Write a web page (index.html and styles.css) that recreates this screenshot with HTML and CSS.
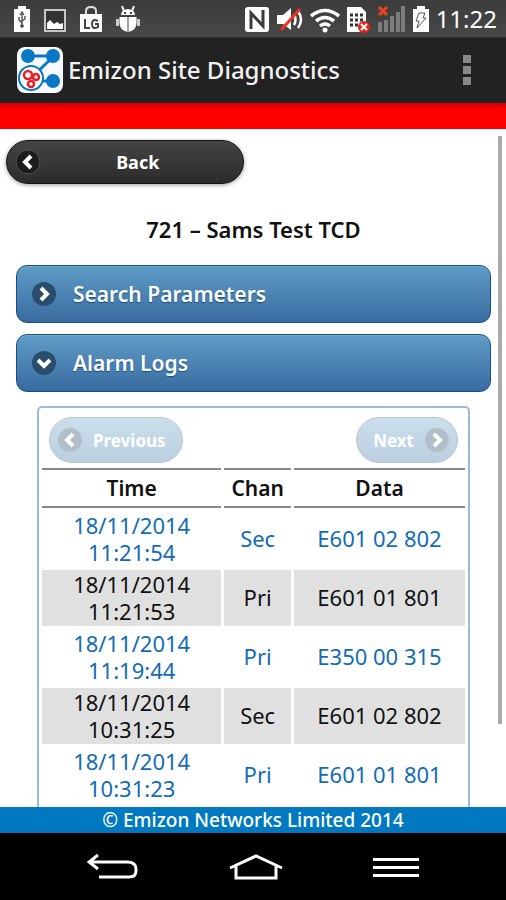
FILE: index.html
```html
<!DOCTYPE html>
<html lang="en">
<head>
<meta charset="utf-8">
<meta name="viewport" content="width=device-width, initial-scale=1">
<title>Emizon Site Diagnostics</title>
<link rel="stylesheet" href="styles.css">
</head>
<body>
<div class="status">
  <div class="status-group notices">
    <svg width="18" height="28" viewBox="0 0 18 28" aria-hidden="true"><path d="M5 1h8v3h4v23H1V4h4z" fill="#fff"/><path d="M9 21V9M9 18l-3-3v-3M9 16l3-2v-3M7 10l2-3 2 3" fill="none" stroke="#444" stroke-width="1.3"/><circle cx="9" cy="21" r="1.8" fill="#444"/></svg>
    <svg width="24" height="28" viewBox="0 0 24 28" aria-hidden="true"><path d="M2 5h20v21H2z" fill="#333" stroke="#c8c8c8" stroke-width="2"/><path d="M4 24v-6l3-3 4 4 3-2 3 2 3-1v6z" fill="#fff"/></svg>
    <svg width="24" height="28" viewBox="0 0 24 28" aria-hidden="true"><path d="M7 10V6q0-4 5-4t5 4v4" fill="none" stroke="#ddd" stroke-width="2"/><path d="M1 9h22v18H1z" fill="#fff"/><path d="M6 14v9h5M19 16q-6-3-6 3t6 3v-3h-3" fill="none" stroke="#444" stroke-width="2"/></svg>
    <svg width="26" height="28" viewBox="0 0 26 28" aria-hidden="true"><path d="M6 10q0-5 7-6 7 1 7 6zM4.500 12h8v15q-8-2-8-9zM13.500 12h8v6q0 7-8 9z" fill="#fff"/><path d="M9 6L7 1M17 6l2-5" stroke="#fff" stroke-width="2"/><path d="M2.500 14v7M23.500 14v7" stroke="#ccc" stroke-width="3"/><path d="M9 8h2M15 8h2" stroke="#444" stroke-width="2"/></svg>
  </div>
  <div class="status-group signals">
    <svg width="26" height="28" viewBox="0 0 26 28" aria-hidden="true"><rect x="1" y="2" width="24" height="25" rx="3" fill="#fff"/><path d="M7 24V8l12 13V5" fill="none" stroke="#3c3c3c" stroke-width="3"/></svg>
    <svg width="28" height="28" viewBox="0 0 28 28" aria-hidden="true"><path d="M1 10h6l8-7v22l-8-6H1z" fill="#fff"/><path d="M18 9q3 6 0 11M22 6q6 9 0 17" fill="none" stroke="#fff" stroke-width="2.500"/><path d="M5 25L24 4" stroke="#f03020" stroke-width="3"/></svg>
    <svg width="30" height="28" viewBox="0 0 30 28" aria-hidden="true"><path d="M1 11q14-11 28 0M6 16q9-7 18 0M10 21q5-4 10 0" fill="none" stroke="#fff" stroke-width="3.500"/><circle cx="15" cy="25" r="2.500" fill="#fff"/></svg>
    <svg width="24" height="28" viewBox="0 0 24 28" aria-hidden="true"><path d="M1 2h14l5 5v20H1z" fill="#fff"/><path d="M4 10h13M4 15h13M4 20h13" stroke="#333" stroke-width="3" stroke-dasharray="3 2"/><circle cx="18" cy="22" r="6" fill="#ee2018"/><path d="M15 19l6 6M21 19l-6 6" stroke="#fff" stroke-width="2"/></svg>
    <svg width="30" height="28" viewBox="0 0 30 28" aria-hidden="true"><path d="M4 27V17M10 27V15M16 27V11M22 27V7M27 27V1" stroke="#7c7c7c" stroke-width="4"/><path d="M3 2l8 8M11 2l-8 8" stroke="#f04020" stroke-width="3"/></svg>
    <svg width="18" height="28" viewBox="0 0 18 28" aria-hidden="true"><path d="M5 1h8v3h4v23H1V4h4z" fill="#fff"/><path d="M7 8h6l-2 5h3L5 23l2-7H4z" fill="none" stroke="#555"/></svg>
    <span class="clock">11:22</span>
  </div>
</div>
<header class="appbar">
  <svg class="logo" width="48" height="48" viewBox="0 0 48 48" aria-hidden="true"><rect x="1" y="1" width="46" height="46" rx="8" fill="#f6faff"/><path d="M12 10h26L17 30M24 35h13" fill="none" stroke="#0878c4" stroke-width="3"/><g fill="#0878c4"><circle cx="12" cy="10" r="7"/><circle cx="37" cy="10" r="7"/><circle cx="37" cy="35" r="7"/></g><circle cx="15" cy="32" r="12" fill="#fff" stroke="#0878c4" stroke-width="2"/><g fill="none" stroke="#ee1c25" stroke-width="2.500"><circle cx="12" cy="29" r="4"/><circle cx="20" cy="31" r="3"/><circle cx="15" cy="38" r="3"/></g></svg>
  <h1>Emizon Site Diagnostics</h1>
  <button class="overflow" aria-label="More options"><i></i><i></i><i></i></button>
</header>
<div class="alert"></div>
<main class="page">
  <a class="pill back" href="#"><svg class="disc" viewBox="0 0 26 26" aria-hidden="true"><circle cx="13" cy="13" r="12"/><path d="M16 7l-6 6 6 6"/></svg><span>Back</span></a>
  <h2>721 – Sams Test TCD</h2>
  <button class="section" aria-expanded="false"><svg class="disc" viewBox="0 0 26 26" aria-hidden="true"><circle cx="13" cy="13" r="12"/><path d="M10 7l6 6-6 6"/></svg>Search Parameters</button>
  <button class="section" aria-expanded="true"><svg class="disc" viewBox="0 0 26 26" aria-hidden="true"><circle cx="13" cy="13" r="12"/><path d="M7 10l6 6 6-6"/></svg>Alarm Logs</button>
  <section class="panel">
    <div class="pager">
      <button class="pill page-btn" disabled><svg class="disc" viewBox="0 0 26 26" aria-hidden="true"><circle cx="13" cy="13" r="12"/><path d="M16 7l-6 6 6 6"/></svg>Previous</button>
      <button class="pill page-btn" disabled>Next<svg class="disc" viewBox="0 0 26 26" aria-hidden="true"><circle cx="13" cy="13" r="12"/><path d="M10 7l6 6-6 6"/></svg></button>
    </div>
    <table>
      <colgroup><col class="c-time"><col class="c-chan"><col class="c-data"></colgroup>
      <thead><tr><th>Time</th><th>Chan</th><th>Data</th></tr></thead>
      <tbody>
        <tr><td>18/11/2014 11:21:54</td><td>Sec</td><td>E601 02 802</td></tr>
        <tr><td>18/11/2014 11:21:53</td><td>Pri</td><td>E601 01 801</td></tr>
        <tr><td>18/11/2014 11:19:44</td><td>Pri</td><td>E350 00 315</td></tr>
        <tr><td>18/11/2014 10:31:25</td><td>Sec</td><td>E601 02 802</td></tr>
        <tr><td>18/11/2014 10:31:23</td><td>Pri</td><td>E601 01 801</td></tr>
      </tbody>
    </table>
  </section>
  <div class="scrollbar"></div>
</main>
<footer class="credit">© Emizon Networks Limited 2014</footer>
<nav class="navbar">
  <button aria-label="Back"><svg width="52" height="32" viewBox="0 0 52 32"><path d="M11 4L2 11l9 7M2 11h38q9 0 9 7v2q0 6-7 6H12" fill="none" stroke="#fff" stroke-width="3"/></svg></button>
  <button aria-label="Home"><svg width="54" height="32" viewBox="0 0 54 32"><path d="M1 17L27 5l26 12M7 15v12h40V15" fill="none" stroke="#fff" stroke-width="3"/></svg></button>
  <button aria-label="Menu"><svg width="46" height="32" viewBox="0 0 46 32"><path d="M0 8.500h46M0 16.500h46M0 24.500h46" stroke="#fff" stroke-width="3"/></svg></button>
</nav>
</body>
</html>
```

FILE: styles.css
```css
* { box-sizing: border-box; }
body {
  margin: 0;
  height: 100vh;
  display: flex;
  flex-direction: column;
  background: #fff;
  color: #111;
  font-family: "Noto Sans", sans-serif;
  font-size: 22px;
}
button { font-family: inherit; border: 0; padding: 0; background: none; }
svg { display: block; flex: none; }
h1, h2 { margin: 0; }

.status {
  flex: none;
  height: 37px;
  padding: 0 9px 0 13px;
  display: flex;
  align-items: center;
  justify-content: space-between;
  background: linear-gradient(#3c3c3c, #484848);
}
.status-group { display: flex; align-items: center; }
.notices { gap: 12px; }
.signals { gap: 6px; }
.clock { color: #fff; font-size: 24px; line-height: 36px; }

.appbar {
  flex: none;
  height: 66px;
  padding: 0 35px 2px 16px;
  display: flex;
  align-items: center;
  gap: 4px;
  background: #222;
  border-top: 1px solid #333;
}
.appbar h1 { flex: 1; color: #f2f2f2; font-size: 24px; font-weight: 500; }
.overflow { display: grid; gap: 3px; }
.overflow i { width: 8px; height: 8px; background: #888; }
.alert { flex: none; height: 26px; background: linear-gradient(#d60000, #f00 30%); }

.page { position: relative; flex: 1; min-height: 0; overflow: hidden; padding: 11px 15px 0 16px; }
.scrollbar { position: absolute; top: 7px; right: 4px; width: 4px; height: 588px; background: #aaa; }
.disc { width: 26px; height: 26px; }
.disc circle { fill: #294e6c; }
.disc path { fill: none; stroke: #fff; stroke-width: 4; }
.pill { display: flex; align-items: center; border-radius: 24px; font-weight: 700; }
.back {
  width: 50%;
  height: 44px;
  margin-left: -10px;
  padding: 0 8px;
  background: linear-gradient(#454545, #2b2b2b);
  border: 1px solid #111;
  box-shadow: 0 1px 4px #0006;
  color: #fff;
  font-size: 18px;
  text-decoration: none;
}
.back span { flex: 1; text-align: center; }
.back .disc circle { fill: #1c1c1c; stroke: #555; }
.page h2 { margin: 30px 0 21px; text-align: center; font-size: 22px; line-height: 30px; font-weight: 600; }
.section {
  width: 100%;
  height: 58px;
  margin-bottom: 11px;
  padding: 0 14px;
  display: flex;
  align-items: center;
  gap: 16px;
  border: 1px solid #145083;
  border-radius: 11px;
  background: linear-gradient(#5f9cc7, #396ba1);
  box-shadow: inset 0 1px #79a8c9;
  color: #fff;
  font-size: 21px;
  font-weight: 600;
  text-shadow: 0 1px 1px #194b7e;
}
.panel {
  height: 600px;
  margin: 14px 21px 0;
  border: 2px solid #9bb9df;
  border-radius: 5px;
  overflow: hidden;
}
.pager { display: flex; justify-content: space-between; padding: 9px 10px 2px; }
.page-btn {
  height: 46px;
  padding: 0 7px;
  gap: 10px;
  border: 1px solid #b9c6d1;
  background: linear-gradient(#cadeeb, #bccfe0);
  color: #fff;
  font-size: 17px;
}
.page-btn:first-child { padding-right: 16px; }
.page-btn:last-child { padding-left: 16px; }
.page-btn .disc circle { fill: #b2bfca; }

table { width: 100%; table-layout: fixed; border-spacing: 3px; }
.c-time { width: 43%; }
.c-chan { width: 16%; }
th, td { padding: 1px 24px; text-align: center; line-height: 27px; font-weight: 400; }
th { padding: 5px 0 4px; border: solid #888; border-width: 2px 0; font-size: 21px; font-weight: 600; }
td + td { padding: 0 0 2px; }
tbody tr:nth-child(odd) { color: #126cb5; }
tbody tr:nth-child(even) td { background: #e0e0e0; }

.credit {
  flex: none;
  background: #0079c1;
  color: #fff;
  text-align: center;
  font-size: 19px;
  line-height: 26px;
  font-weight: 500;
}
.navbar {
  flex: none;
  height: 67px;
  padding: 0 87px;
  display: flex;
  align-items: center;
  justify-content: space-between;
  background: #000;
}
```
